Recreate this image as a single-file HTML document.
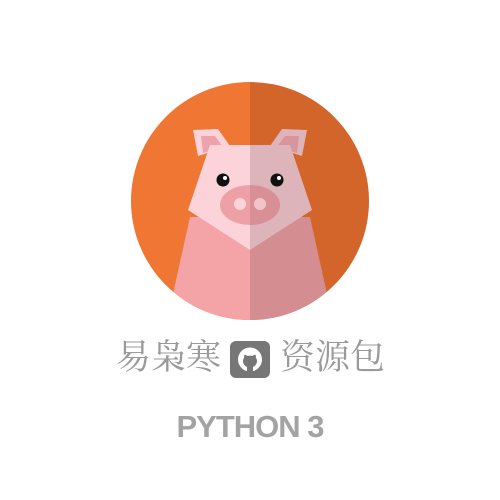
<!DOCTYPE html>
<html><head><meta charset="utf-8"><style>
html,body{margin:0;padding:0;background:#fff;width:500px;height:500px;overflow:hidden;position:relative}
.cn{position:absolute;top:335px;font-family:"Liberation Serif","Noto Serif CJK SC",serif;font-size:35px;line-height:46px;color:#9a9a9a;white-space:nowrap}
.py{position:absolute;left:0;width:500px;top:409px;text-align:center;font-family:"Liberation Sans",sans-serif;font-weight:bold;font-size:31px;line-height:36px;letter-spacing:-1px;color:#a3a3a3}
</style></head><body>
<svg width="500" height="330" style="position:absolute;left:0;top:0">
<defs><clipPath id="c"><circle cx="250" cy="201" r="119"/></clipPath></defs>
<g clip-path="url(#c)">
<rect x="130" y="80" width="120" height="245" fill="#ef7733"/>
<rect x="250" y="80" width="125" height="245" fill="#d4652a"/>
<polygon points="190,217 250,217 250,330 165,330" fill="#f4a4a7"/>
<polygon points="250,217 310,217 335,330 250,330" fill="#d48d90"/>
</g>
<polygon points="193,130 218,129 230,146 198,156" fill="#fcd3d8"/>
<polygon points="201,136 215,136 223,147 203,153" fill="#eda3ab"/>
<polygon points="307,130 282,129 270,146 302,156" fill="#dcb4ba"/>
<polygon points="299,136 285,136 277,147 297,153" fill="#d9959c"/>
<polygon points="210,145 250,145 250,250 188,210" fill="#fcd3d8"/>
<polygon points="250,145 290,145 312,210 250,250" fill="#dcb4ba"/>
<circle cx="223" cy="180" r="6.5" fill="#111"/><circle cx="225" cy="178" r="2" fill="#fff"/>
<circle cx="277" cy="180" r="6.5" fill="#111"/><circle cx="279" cy="178" r="2" fill="#fff"/>
<path d="M250 185 A30 20 0 0 0 250 225 Z" fill="#eda0a6"/>
<path d="M250 185 A30 20 0 0 1 250 225 Z" fill="#d88f95"/>
<circle cx="240" cy="204" r="6" fill="#fcd3d8"/>
<circle cx="260" cy="204" r="6" fill="#f1c4c9"/>
</svg>
<div class="cn" style="left:116px">易枭寒</div>
<div class="cn" style="left:280px">资源包</div>
<svg width="40" height="37" style="position:absolute;left:230px;top:341px" viewBox="0 0 40 37">
<rect width="40" height="37" rx="6" fill="#767676"/>
<circle cx="20" cy="18.5" r="12" fill="#fff"/>
<path d="M17 31 v-5 c-2-1-4-3-4-6 c0-1.5 .5-2.5 1.2-3.3 c-.2-1-.2-2 .3-3 c1 0 2 .5 3 1.2 c1.5-.4 3.5-.4 5 0 c1-.7 2-1.2 3-1.2 c.5 1 .5 2 .3 3 c.7 .8 1.2 1.8 1.2 3.3 c0 3-2 5-4 6 v5 Z" fill="#767676"/>
</svg>
<div class="py">PYTHON 3</div>
</body></html>
